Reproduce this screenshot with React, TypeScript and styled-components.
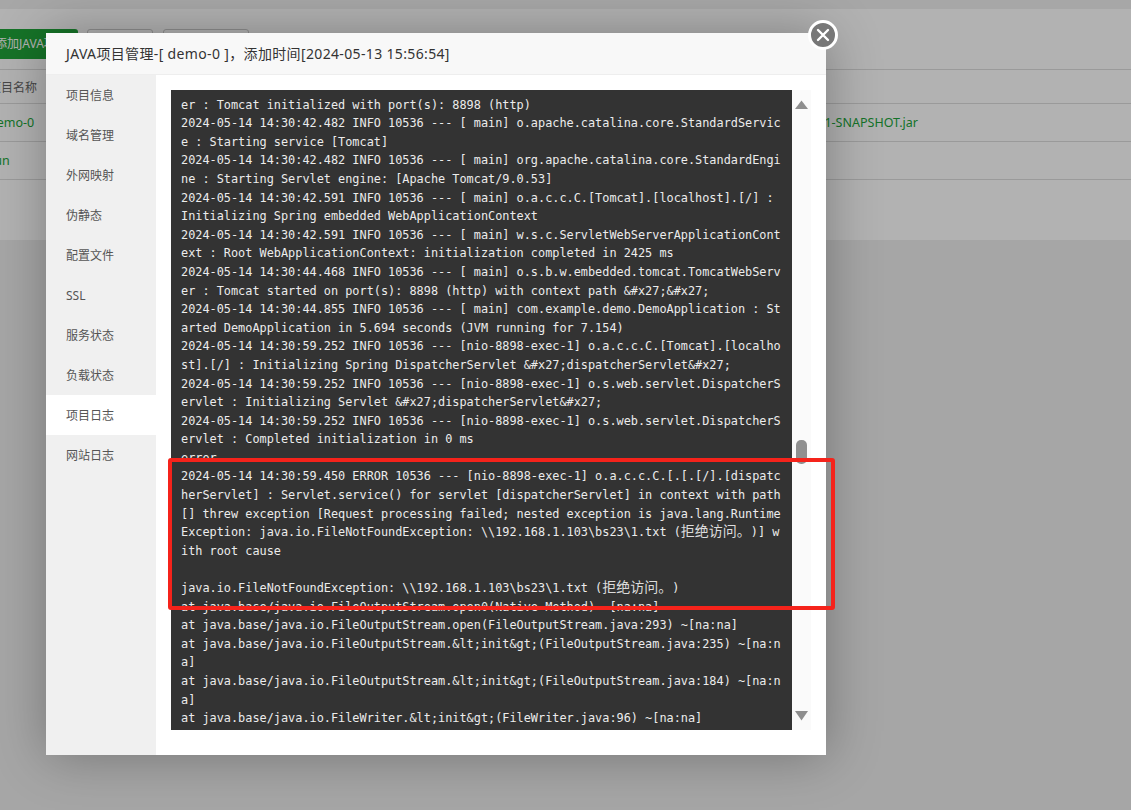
import styled, { createGlobalStyle } from 'styled-components'

const menuItems = ['项目信息', '域名管理', '外网映射', '伪静态', '配置文件', 'SSL', '服务状态', '负载状态', '项目日志', '网站日志']

const logLines = [
  'er : Tomcat initialized with port(s): 8898 (http)',
  '2024-05-14 14:30:42.482 INFO 10536 --- [ main] o.apache.catalina.core.StandardServic',
  'e : Starting service [Tomcat]',
  '2024-05-14 14:30:42.482 INFO 10536 --- [ main] org.apache.catalina.core.StandardEngi',
  'ne : Starting Servlet engine: [Apache Tomcat/9.0.53]',
  '2024-05-14 14:30:42.591 INFO 10536 --- [ main] o.a.c.c.C.[Tomcat].[localhost].[/] :',
  'Initializing Spring embedded WebApplicationContext',
  '2024-05-14 14:30:42.591 INFO 10536 --- [ main] w.s.c.ServletWebServerApplicationCont',
  'ext : Root WebApplicationContext: initialization completed in 2425 ms',
  '2024-05-14 14:30:44.468 INFO 10536 --- [ main] o.s.b.w.embedded.tomcat.TomcatWebServ',
  'er : Tomcat started on port(s): 8898 (http) with context path &#x27;&#x27;',
  '2024-05-14 14:30:44.855 INFO 10536 --- [ main] com.example.demo.DemoApplication : St',
  'arted DemoApplication in 5.694 seconds (JVM running for 7.154)',
  '2024-05-14 14:30:59.252 INFO 10536 --- [nio-8898-exec-1] o.a.c.c.C.[Tomcat].[localho',
  'st].[/] : Initializing Spring DispatcherServlet &#x27;dispatcherServlet&#x27;',
  '2024-05-14 14:30:59.252 INFO 10536 --- [nio-8898-exec-1] o.s.web.servlet.DispatcherS',
  'ervlet : Initializing Servlet &#x27;dispatcherServlet&#x27;',
  '2024-05-14 14:30:59.252 INFO 10536 --- [nio-8898-exec-1] o.s.web.servlet.DispatcherS',
  'ervlet : Completed initialization in 0 ms',
  'error',
  '2024-05-14 14:30:59.450 ERROR 10536 --- [nio-8898-exec-1] o.a.c.c.C.[.[.[/].[dispatc',
  'herServlet] : Servlet.service() for servlet [dispatcherServlet] in context with path',
  '[] threw exception [Request processing failed; nested exception is java.lang.Runtime',
  'Exception: java.io.FileNotFoundException: \\\\192.168.1.103\\bs23\\1.txt (拒绝访问。)] w',
  'ith root cause',
  ' ',
  'java.io.FileNotFoundException: \\\\192.168.1.103\\bs23\\1.txt (拒绝访问。)',
  'at java.base/java.io.FileOutputStream.open0(Native Method) ~[na:na]',
  'at java.base/java.io.FileOutputStream.open(FileOutputStream.java:293) ~[na:na]',
  'at java.base/java.io.FileOutputStream.&lt;init&gt;(FileOutputStream.java:235) ~[na:n',
  'a]',
  'at java.base/java.io.FileOutputStream.&lt;init&gt;(FileOutputStream.java:184) ~[na:n',
  'a]',
  'at java.base/java.io.FileWriter.&lt;init&gt;(FileWriter.java:96) ~[na:na]',
]

const App = () => {
  return (
    <>
      <GlobalStyle />
      <TopStrip />
      <Panel>
        <Toolbar>
          <PrimaryBtn>添加JAVA项目</PrimaryBtn>
          <OutlineBtn $width={66} />
          <OutlineBtn $width={86} />
        </Toolbar>
        <TableRow $height={34}>
          <HeadCell>项目名称</HeadCell>
        </TableRow>
        <TableRow $height={38}>
          <LinkCell>demo-0</LinkCell>
          <LinkCell>demo-0-0.0.1-SNAPSHOT.jar</LinkCell>
        </TableRow>
        <TableRow $height={38}>
          <LinkCell>run</LinkCell>
        </TableRow>
      </Panel>
      <Overlay />
      <Modal>
        <ModalTitle>JAVA项目管理-[ demo-0 ]，添加时间[2024-05-13 15:56:54]</ModalTitle>
        <ModalBody>
          <Sidebar>
            {menuItems.map((item) => (
              <MenuItem key={item} $active={item === '项目日志'}>{item}</MenuItem>
            ))}
          </Sidebar>
          <Content>
            <LogBox>
              {logLines.map((line, i) => (
                <LogLine key={i}>
                  {line.split(/([\u4e00-\u9fff。]+)/).map((part, j) =>
                    j % 2 ? <Cjk key={j}>{part}</Cjk> : part)}
                </LogLine>
              ))}
            </LogBox>
            <Scrollbar>
              <svg width="13" height="9" viewBox="0 0 13 9">
                <path d="M6.5 0.5 L13 9 L0 9 Z" fill="#8e8e8e" />
              </svg>
              <Thumb />
              <DownArrow width="13" height="10" viewBox="0 0 13 10">
                <path d="M0 0 L13 0 L6.5 9.5 Z" fill="#8e8e8e" />
              </DownArrow>
            </Scrollbar>
          </Content>
        </ModalBody>
        <CloseBtn>
          <svg width="14" height="14" viewBox="0 0 14 14">
            <path d="M2 2 L12 12 M12 2 L2 12" stroke="#fff" strokeWidth="2.4" strokeLinecap="round" />
          </svg>
        </CloseBtn>
        <Annotation />
      </Modal>
    </>
  )
}

const GlobalStyle = createGlobalStyle`
  html, body {
    margin: 0;
    height: 810px;
    overflow: hidden;
    background: #eeeeee;
    font-family: "Noto Sans", "Noto Sans CJK SC", sans-serif;
    color: #333;
  }
`

const TopStrip = styled.div`
  height: 9px;
  background: #efefef;
`

const Panel = styled.div`
  height: 231px;
  background: #fff;
  overflow: hidden;
`

const Toolbar = styled.div`
  height: 60px;
  box-sizing: border-box;
  padding-top: 20px;
  margin-left: -11px;
  display: flex;
  gap: 9px;
`

const PrimaryBtn = styled.div`
  width: 89px;
  height: 30px;
  flex: none;
  box-sizing: border-box;
  padding-left: 6px;
  line-height: 30px;
  font-size: 12px;
  white-space: nowrap;
  color: #fff;
  background: #20a53a;
  border-radius: 3px;
`

const OutlineBtn = styled.div<{ $width: number }>`
  width: ${(p) => p.$width}px;
  height: 30px;
  box-sizing: border-box;
  background: #fff;
  border: 1px solid #ccc;
  border-radius: 3px;
  & + & {
    margin-left: 1px;
  }
`

const TableRow = styled.div<{ $height: number }>`
  height: ${(p) => p.$height}px;
  box-sizing: border-box;
  margin-left: -11px;
  width: 1142px;
  padding-right: 213px;
  display: grid;
  grid-template-columns: 1fr auto;
  align-items: center;
  border-top: 1px solid #ddd;
  &:last-child {
    border-bottom: 1px solid #ddd;
    height: ${(p) => p.$height + 1}px;
  }
`

const HeadCell = styled.div`
  font-size: 12px;
  color: #666;
  white-space: nowrap;
`

const LinkCell = styled.div`
  font-size: 12.5px;
  color: #20a53a;
  white-space: nowrap;
`

const Overlay = styled.div`
  position: fixed;
  inset: 0;
  background: rgba(0, 0, 0, 0.3);
`

const Modal = styled.div`
  position: absolute;
  top: 33px;
  left: 46px;
  width: 780px;
  height: 722px;
  display: flex;
  flex-direction: column;
  background: #fff;
  box-shadow: 1px 1px 50px rgba(0, 0, 0, 0.3);
`

const ModalTitle = styled.div`
  height: 42px;
  flex: none;
  box-sizing: border-box;
  padding-left: 20px;
  line-height: 41px;
  font-size: 14px;
  letter-spacing: 0.35px;
  color: #333;
  background: #f8f8f8;
  border-bottom: 1px solid #eee;
`

const ModalBody = styled.div`
  flex: 1;
  display: flex;
  min-height: 0;
`

const Sidebar = styled.div`
  width: 110px;
  flex: none;
  background: #f0f0f0;
`

const MenuItem = styled.div<{ $active: boolean }>`
  height: 40px;
  padding-left: 20px;
  line-height: 41px;
  font-size: 12px;
  color: #555;
  background: ${(p) => (p.$active ? '#fff' : 'transparent')};
`

const Content = styled.div`
  flex: 1;
  display: flex;
  align-items: flex-start;
  padding: 15px 15px 0;
`

const LogBox = styled.div`
  width: 621px;
  height: 640px;
  flex: none;
  box-sizing: border-box;
  padding: 5.6px 0 0 10px;
  overflow: hidden;
  background: #333;
  color: #ececec;
  font-family: "DejaVu Sans Mono", "Noto Sans CJK SC", monospace;
  font-size: 11.86px;
`

const LogLine = styled.div`
  height: 18.6px;
  line-height: 18.6px;
  white-space: pre;
`

const Cjk = styled.span`
  font-family: "Noto Sans CJK SC", sans-serif;
  font-size: 14px;
  line-height: 1;
  color: #dcdcdc;
  text-spacing-trim: space-all;
`

const Scrollbar = styled.div`
  width: 19px;
  height: 640px;
  flex: none;
  box-sizing: border-box;
  padding: 10px 0 9px 3px;
  display: flex;
  flex-direction: column;
  background: #fafafa;
`

const Thumb = styled.div`
  width: 11px;
  height: 24px;
  margin: 331px 0 0 1px;
  border-radius: 5px;
  background: #909090;
`

const DownArrow = styled.svg`
  margin-top: auto;
`

const CloseBtn = styled.div`
  position: absolute;
  top: -13px;
  right: -12px;
  width: 30px;
  height: 30px;
  box-sizing: border-box;
  display: flex;
  align-items: center;
  justify-content: center;
  border: 3px solid #fff;
  border-radius: 50%;
  background: #777;
`

const Annotation = styled.div`
  position: absolute;
  top: 425px;
  left: 122px;
  width: 667px;
  height: 152px;
  box-sizing: border-box;
  border: 4px solid #f5231b;
  border-radius: 3px;
`

export default App
